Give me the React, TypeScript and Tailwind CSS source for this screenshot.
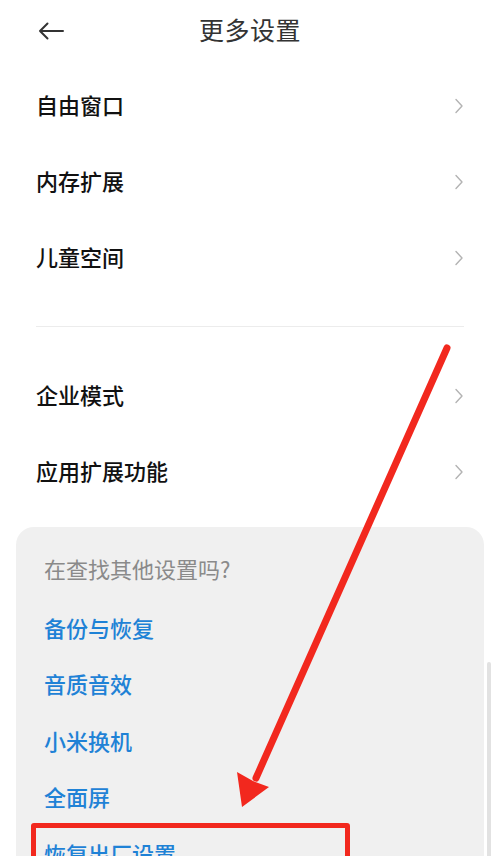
import React from 'react'

const FONT = { fontFamily: '"Noto Sans CJK SC", "Noto Sans", sans-serif' }

const MAIN_GROUPS: string[][] = [
  ['自由窗口', '内存扩展', '儿童空间'],
  ['企业模式', '应用扩展功能'],
]

const SUGGESTIONS = ['备份与恢复', '音质音效', '小米换机', '全面屏', '恢复出厂设置']

function Chevron() {
  return (
    <svg width="10" height="16" viewBox="0 0 10 16" className="shrink-0 mt-[4px]">
      <path d="M2 1.5 L8 8 L2 14.5" fill="none" stroke="#b3b3b3" strokeWidth="1.4" strokeLinecap="round" strokeLinejoin="round" />
    </svg>
  )
}

function Row({ label }: { label: string }) {
  return (
    <div className="flex items-center justify-between h-[76px] pl-[36px] pr-[36px]">
      <span className="text-[22px] font-medium text-[#111]">{label}</span>
      <Chevron />
    </div>
  )
}

export default function App() {
  return (
    <div className="relative w-[500px] h-[856px] overflow-hidden bg-white" style={FONT}>
      {/* header */}
      <div className="relative flex items-center justify-center h-[62px]">
        <svg width="28" height="20" viewBox="0 0 28 20" className="absolute left-[37px] top-[21px]">
          <path d="M26 10 H3 M10.5 2.5 L3 10 L10.5 17.5" fill="none" stroke="#333" strokeWidth="2" strokeLinecap="round" strokeLinejoin="round" />
        </svg>
        <span className="text-[25px] text-[#333] tracking-[0.5px] -mt-[2px]">更多设置</span>
      </div>

      <div className="pt-[4px]">
        {MAIN_GROUPS[0].map((l) => <Row key={l} label={l} />)}
      </div>
      <div className="mx-[36px] mt-[32px] h-px bg-[#ececec]" />
      <div className="pt-[29px]">
        {MAIN_GROUPS[1].map((l) => <Row key={l} label={l} />)}
      </div>

      {/* other settings card */}
      <div className="mx-[16px] mt-[19px] rounded-[18px] bg-[#f0f0f0] pt-[13px] pl-[28px] pb-[40px]">
        <div className="flex items-center h-[56px] text-[22px] text-[#8a8a8a]">在查找其他设置吗?</div>
        <div className="pt-[3px]">
          {SUGGESTIONS.map((s) => (
            <div key={s} className="flex items-center h-[56.5px] text-[22px] font-medium text-[#1f82d6]">{s}</div>
          ))}
        </div>
      </div>

      {/* scrollbar */}
      <div className="absolute left-[487px] top-[662px] w-[4px] h-[220px] rounded-full bg-[#e2e2e2]" />

      {/* red highlight box */}
      <div className="absolute left-[31px] top-[823px] w-[319px] h-[60px] border-[5px] border-[#f2281e] rounded-[3px]" />

      {/* red arrow */}
      <svg width="500" height="856" viewBox="0 0 500 856" className="absolute left-0 top-0 pointer-events-none">
        <line x1="447" y1="348" x2="256" y2="778" stroke="#f2281e" strokeWidth="7" strokeLinecap="round" />
        <polygon points="242,807 237,772 253,781 269,787" fill="#f2281e" />
      </svg>
    </div>
  )
}
